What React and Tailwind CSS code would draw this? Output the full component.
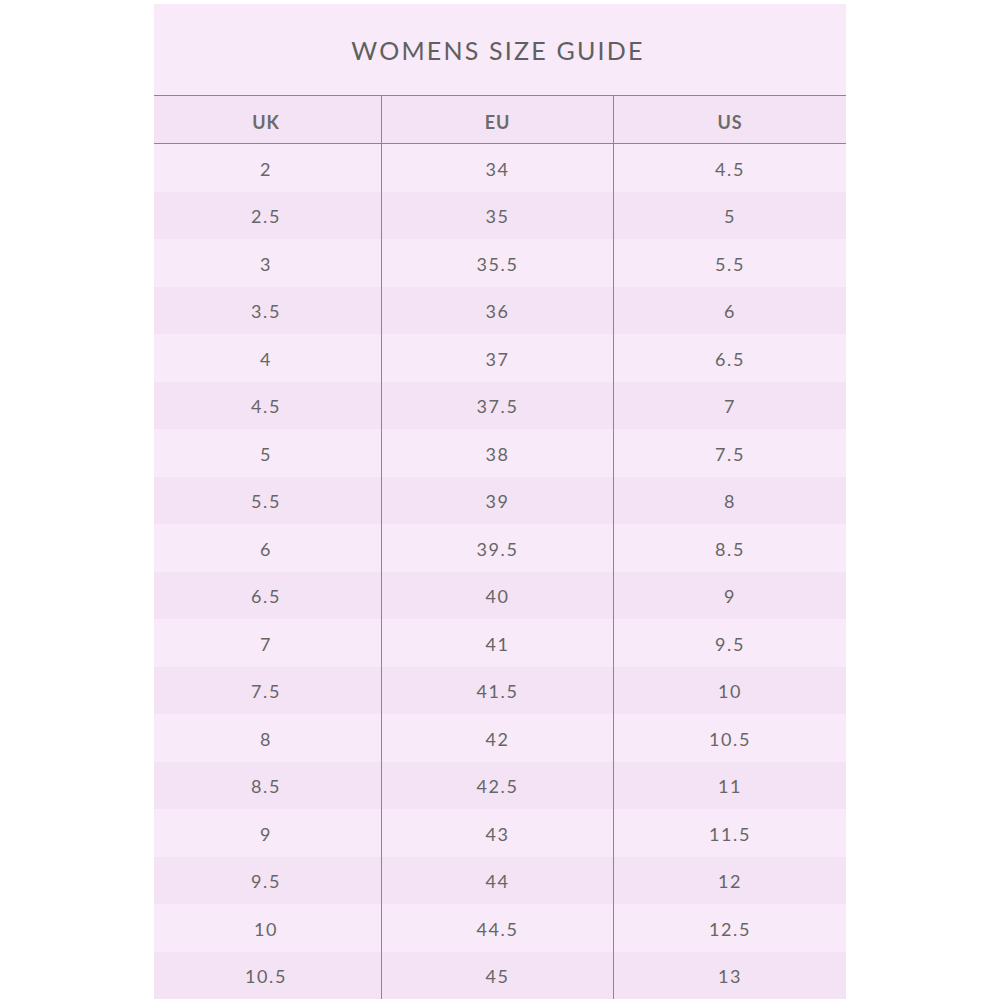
const rows = [
  ["2", "34", "4.5"],
  ["2.5", "35", "5"],
  ["3", "35.5", "5.5"],
  ["3.5", "36", "6"],
  ["4", "37", "6.5"],
  ["4.5", "37.5", "7"],
  ["5", "38", "7.5"],
  ["5.5", "39", "8"],
  ["6", "39.5", "8.5"],
  ["6.5", "40", "9"],
  ["7", "41", "9.5"],
  ["7.5", "41.5", "10"],
  ["8", "42", "10.5"],
  ["8.5", "42.5", "11"],
  ["9", "43", "11.5"],
  ["9.5", "44", "12"],
  ["10", "44.5", "12.5"],
  ["10.5", "45", "13"],
];

const App = () => {
  return (
    <div className="w-[1000px] h-[1000px] overflow-hidden bg-white pt-[4px] font-['Lato',sans-serif] text-[#666]">
      <div className="w-[692px] mx-auto bg-[#f8eaf8]">
        <div className="h-[92px] flex items-center justify-center border-b border-[#8c868c]">
          <h1 className="text-[25px] tracking-[2.2px] text-[#5f5f62] pt-[2px] pr-[4px]">WOMENS SIZE GUIDE</h1>
        </div>
        <div className="grid grid-cols-[227px_232px_233px] h-[48px] bg-[#f4e3f4] border-b border-[#8c868c] font-bold text-[18px] tracking-[1px] text-[#6b6b6b]">
          <div className="flex items-center justify-center pt-[5px] pr-[3px]">UK</div>
          <div className="flex items-center justify-center pt-[5px] border-l border-[#8c868c]">EU</div>
          <div className="flex items-center justify-center pt-[5px] border-l border-[#8c868c]">US</div>
        </div>
        {rows.map((r, i) => (
          <div
            key={i}
            className={
              "grid grid-cols-[227px_232px_233px] h-[47.5px] text-[18px] tracking-[1.6px] " +
              (i % 2 === 0 ? "bg-[#f8eaf8]" : "bg-[#f4e3f4]")
            }
          >
            <div className="flex items-center justify-center pt-[3px] pr-[3px]">{r[0]}</div>
            <div className="flex items-center justify-center pt-[3px] border-l border-[#8c868c]">{r[1]}</div>
            <div className="flex items-center justify-center pt-[3px] border-l border-[#8c868c]">{r[2]}</div>
          </div>
        ))}
      </div>
    </div>
  );
};

export default App;
